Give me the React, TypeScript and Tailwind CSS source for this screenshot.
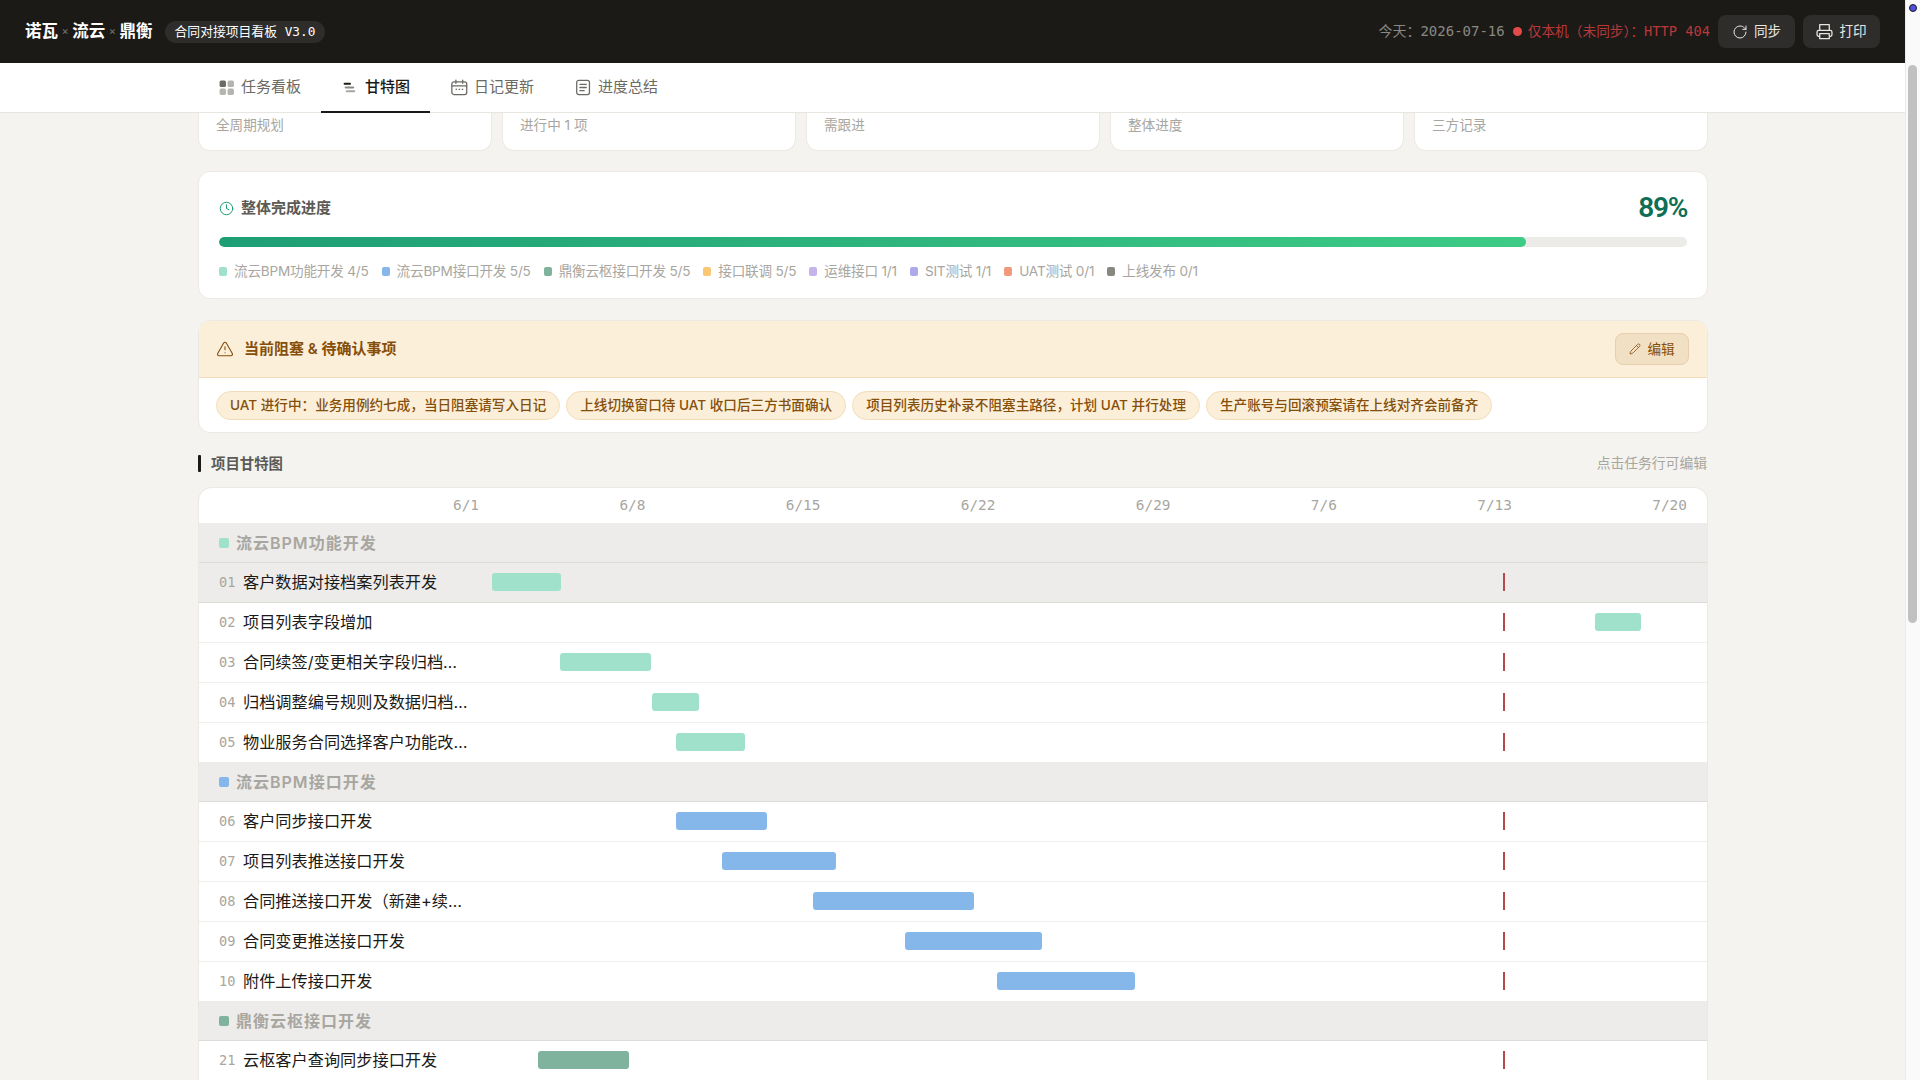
import React from 'react';
import { RotateCw, Clock, TriangleAlert, Pencil } from 'lucide-react';

const SANS = "font-['Inter','Noto_Sans_CJK_SC',sans-serif]";

const stats = ['全周期规划', '进行中 1 项', '需跟进', '整体进度', '三方记录'];

const legend = [
  { color: 'bg-[#9fe1cb]', text: '流云BPM功能开发 4/5' },
  { color: 'bg-[#85b7eb]', text: '流云BPM接口开发 5/5' },
  { color: 'bg-[#7fb39d]', text: '鼎衡云枢接口开发 5/5' },
  { color: 'bg-[#fac775]', text: '接口联调 5/5' },
  { color: 'bg-[#c5b3ec]', text: '运维接口 1/1' },
  { color: 'bg-[#afa9ec]', text: 'SIT测试 1/1' },
  { color: 'bg-[#f0997b]', text: 'UAT测试 0/1' },
  { color: 'bg-[#888780]', text: '上线发布 0/1' },
];

const chips = [
  'UAT 进行中：业务用例约七成，当日阻塞请写入日记',
  '上线切换窗口待 UAT 收口后三方书面确认',
  '项目列表历史补录不阻塞主路径，计划 UAT 并行处理',
  '生产账号与回滚预案请在上线对齐会前备齐',
];

const dates = ['6/1', '6/8', '6/15', '6/22', '6/29', '7/6', '7/13', '7/20'];

type Task = { no: string; name: string; left: number; width: number; hover?: boolean };
type Group = { name: string; dot: string; bar: string; tasks: Task[] };

// left is measured from the start of the track, which sits at x=454
const groups: Group[] = [
  {
    name: '流云BPM功能开发',
    dot: 'bg-[#9fe1cb]',
    bar: 'bg-[#9fe1cb]',
    tasks: [
      { no: '01', name: '客户数据对接档案列表开发', left: 38, width: 69, hover: true },
      { no: '02', name: '项目列表字段增加', left: 1141, width: 46 },
      { no: '03', name: '合同续签/变更相关字段归档优化', left: 106, width: 91 },
      { no: '04', name: '归档调整编号规则及数据归档处理', left: 198, width: 47 },
      { no: '05', name: '物业服务合同选择客户功能改造', left: 222, width: 69 },
    ],
  },
  {
    name: '流云BPM接口开发',
    dot: 'bg-[#85b7eb]',
    bar: 'bg-[#85b7eb]',
    tasks: [
      { no: '06', name: '客户同步接口开发', left: 222, width: 91 },
      { no: '07', name: '项目列表推送接口开发', left: 268, width: 114 },
      { no: '08', name: '合同推送接口开发（新建+续签）', left: 359, width: 161 },
      { no: '09', name: '合同变更推送接口开发', left: 451, width: 137 },
      { no: '10', name: '附件上传接口开发', left: 543, width: 138 },
    ],
  },
  {
    name: '鼎衡云枢接口开发',
    dot: 'bg-[#7fb39d]',
    bar: 'bg-[#7fb39d]',
    tasks: [{ no: '21', name: '云枢客户查询同步接口开发', left: 84, width: 91 }],
  },
];

function BoardIcon() {
  return (
    <svg width="17" height="17" viewBox="0 0 16 16">
      <rect x="1.5" y="1.5" width="6" height="6" rx="1.5" fill="#6b6a65" />
      <rect x="9" y="1.5" width="6" height="6" rx="1.5" fill="#b5b4ae" />
      <rect x="1.5" y="9" width="6" height="6" rx="1.5" fill="#b5b4ae" />
      <rect x="9" y="9" width="6" height="6" rx="1.5" fill="#b5b4ae" />
    </svg>
  );
}

function GanttIcon() {
  return (
    <svg width="17" height="17" viewBox="0 0 16 16">
      <rect x="1.5" y="3.5" width="7" height="2" rx="1" fill="#1c1a17" />
      <rect x="2.5" y="7" width="9" height="2" rx="1" fill="#8a8983" />
      <rect x="3.5" y="10.5" width="9" height="2" rx="1" fill="#a8a6a0" />
    </svg>
  );
}

function CalendarIcon() {
  return (
    <svg width="17" height="17" viewBox="0 0 16 16" fill="none" stroke="#6b6a65" strokeWidth="1.2">
      <rect x="0.8" y="2.6" width="14" height="12" rx="2" />
      <path d="M0.8 6.4h14M4.6 1v3M11 1v3" strokeLinecap="round" />
      <path d="M4.3 9.8h1.4M7.2 9.8h1.4M10.1 9.8h1.4" />
    </svg>
  );
}

function DocIcon() {
  return (
    <svg width="17" height="17" viewBox="0 0 16 16" fill="none" stroke="#6b6a65" strokeWidth="1.2">
      <rect x="1.6" y="1.2" width="12" height="13.6" rx="2" />
      <path d="M4.6 5h6M4.6 8h6M4.6 11h4" strokeLinecap="round" />
    </svg>
  );
}

function PrintIcon() {
  return (
    <svg width="17" height="17" viewBox="0 0 16 16" fill="none" stroke="currentColor" strokeWidth="1.2" strokeLinejoin="round">
      <path d="M3.5 7V1.5h9V7" />
      <path d="M3.5 12.5h-1A1.5 1.5 0 0 1 1 11V8.5A1.5 1.5 0 0 1 2.5 7h11A1.5 1.5 0 0 1 15 8.5V11a1.5 1.5 0 0 1-1.5 1.5h-1" />
      <rect x="3.5" y="10" width="9" height="4.8" />
    </svg>
  );
}

const tabs = [
  { label: '任务看板', icon: <BoardIcon /> },
  { label: '甘特图', icon: <GanttIcon />, active: true },
  { label: '日记更新', icon: <CalendarIcon /> },
  { label: '进度总结', icon: <DocIcon /> },
];

function TaskRow({ task, bar, last }: { task: Task; bar: string; last: boolean }) {
  return (
    <div
      className={`flex items-center ${last ? 'h-[39px]' : 'h-10 border-b'} ${
        task.hover ? 'bg-[#edecea] border-[#dcdad6]' : 'bg-white border-[#efeeeb]'
      }`}
    >
      <div className="flex w-[255px] shrink-0 items-center pl-[20px]">
        <span className="w-[24px] shrink-0 font-['DejaVu_Sans_Mono',monospace] text-[13.6px] text-[#a8a6a0]">
          {task.no}
        </span>
        <span className="w-[226px] shrink-0 truncate text-[16.2px] text-[#1c1a17]">{task.name}</span>
      </div>
      <div className="relative mt-[10px] h-[18px] flex-1 self-start">
        <div
          className={`absolute top-0 h-[18px] rounded-[3px] ${bar}`}
          style={{ left: task.left, width: task.width }}
        />
        <div className="absolute left-[1049px] top-0 h-[18px] w-[2px] bg-[#b5494a]" />
      </div>
    </div>
  );
}

export default function App() {
  return (
    <div className={`flex h-screen overflow-hidden bg-[#f4f3ef] ${SANS}`}>
      <div className="flex min-w-0 flex-1 flex-col">
        <header className="flex h-[63px] shrink-0 items-center justify-between bg-[#1c1a17] px-[25px]">
          <div className="flex items-center">
            <span className="text-[16.5px] font-bold text-white">诺瓦</span>
            <span className="mx-[3.5px] text-[11px] text-[#77756f]">×</span>
            <span className="text-[16.5px] font-bold text-white">流云</span>
            <span className="mx-[3.5px] text-[11px] text-[#77756f]">×</span>
            <span className="text-[16.5px] font-bold text-white">鼎衡</span>
            <span className="ml-[12px] flex h-[22px] items-center rounded-full bg-[#2e2d2b] px-[10px] font-['DejaVu_Sans_Mono','Noto_Sans_CJK_SC',monospace] text-[12.8px] text-white">
              合同对接项目看板 V3.0
            </span>
          </div>
          <div className="flex items-center">
            <span className="font-['DejaVu_Sans_Mono','Noto_Sans_CJK_SC',monospace] text-[14px] text-[#8a8983]">
              今天：2026-07-16
            </span>
            <span className="ml-[8px] h-[9px] w-[9px] rounded-full bg-[#e24b4a]" />
            <span className="ml-[6px] font-['DejaVu_Sans_Mono','Noto_Sans_CJK_SC',monospace] text-[13.7px] text-[#b8383a]">
              仅本机（未同步）：HTTP 404
            </span>
            <button className="ml-[8px] flex h-[33px] w-[77px] items-center justify-center gap-[6px] rounded-lg bg-[#2e2d2b] text-[13.6px] text-[#e8e6e1]">
              <RotateCw size={16} strokeWidth={1.5} />
              同步
            </button>
            <button className="ml-[8px] flex h-[33px] w-[77px] items-center justify-center gap-[6px] rounded-lg bg-[#2e2d2b] text-[13.6px] text-[#e8e6e1]">
              <PrintIcon />
              打印
            </button>
          </div>
        </header>

        <nav className="flex h-[50px] shrink-0 items-stretch border-b border-[#e8e6e1] bg-white pl-[197px]">
          {tabs.map((tab) => (
            <div
              key={tab.label}
              className={`-mb-px flex items-center gap-[6px] border-b-2 pl-[21px] pr-[20px] text-[15px] ${
                tab.active
                  ? 'border-[#1c1a17] font-medium text-[#1c1a17]'
                  : 'border-transparent text-[#6b6a65]'
              }`}
            >
              {tab.icon}
              {tab.label}
            </div>
          ))}
        </nav>

        <main className="ml-[198px] flex w-[1510px] flex-col">
          <div className="grid h-[38px] grid-cols-5 gap-[10px]">
            {stats.map((label) => (
              <div
                key={label}
                className="rounded-b-xl border border-t-0 border-[#ece9e3] bg-white pl-[17px] pt-[2px] text-[13.6px] text-[#a8a6a0]"
              >
                {label}
              </div>
            ))}
          </div>

          <section className="mt-[20px] h-[128px] rounded-xl border border-[#ece9e3] bg-white px-5 pt-[18px]">
            <div className="flex h-[36px] items-center justify-between">
              <div className="flex items-center gap-[7px] text-[15px] font-semibold text-[#5c5a55]">
                <Clock size={15} strokeWidth={1.6} className="text-[#1d9e75]" />
                整体完成进度
              </div>
              <span className="font-['Roboto','Inter',sans-serif] text-[28px] font-semibold tracking-[-1.3px] text-[#0f6e56]">
                89%
              </span>
            </div>
            <div className="mt-[11px] h-[10px] overflow-hidden rounded-full bg-[#ecebe7]">
              <div className="h-full w-[89%] rounded-full bg-gradient-to-r from-[#1d9e75] to-[#3dcb85]" />
            </div>
            <div className="mt-[14px] flex items-center gap-[13px]">
              {legend.map((item) => (
                <div
                  key={item.text}
                  className="flex items-center gap-[7px] text-[13.6px] tracking-[-0.2px] text-[#a8a6a0]"
                >
                  <span className={`h-[9px] w-[8px] rounded-[2px] ${item.color}`} />
                  {item.text}
                </div>
              ))}
            </div>
          </section>

          <section className="mt-[21px] h-[113px] overflow-hidden rounded-xl border border-[#ece9e3] bg-white">
            <div className="flex h-[57px] items-center justify-between border-b border-[#f0dcb8] bg-[#fcefd9] pl-[17px] pr-[18px]">
              <div className="flex items-center gap-[10px] text-[15px] font-semibold text-[#854f0b]">
                <TriangleAlert size={18} strokeWidth={1.5} />
                当前阻塞 & 待确认事项
              </div>
              <button className="flex h-[32px] w-[74px] items-center justify-center gap-[6px] rounded-lg border border-[#e6d0ab] bg-[#f2e0c5] text-[13.6px] text-[#854f0b]">
                <Pencil size={12} strokeWidth={1.6} />
                编辑
              </button>
            </div>
            <div className="flex gap-[6px] pl-[17px] pt-[13px]">
              {chips.map((chip) => (
                <span
                  key={chip}
                  className="flex h-[29px] items-center rounded-full border border-[#f0dcb8] bg-[#fcefd9] px-[13px] text-[13.6px] font-medium text-[#854f0b]"
                >
                  {chip}
                </span>
              ))}
            </div>
          </section>

          <div className="mt-[22px] flex h-[17px] items-center justify-between pr-px">
            <div className="flex items-center gap-[10px] text-[14.4px] font-semibold text-[#5c5a55]">
              <span className="h-[17px] w-[3px] rounded-[1px] bg-[#1c1a17]" />
              项目甘特图
            </div>
            <span className="text-[13.8px] text-[#a8a6a0]">点击任务行可编辑</span>
          </div>

          <section className="mt-[15px] overflow-hidden rounded-t-[14px] border border-b-0 border-[#ece9e3] bg-white">
            <div className="flex h-[35px] items-center justify-between pl-[254px] pr-[20px] font-['DejaVu_Sans_Mono',monospace] text-[14.4px] text-[#a8a6a0]">
              {dates.map((d) => (
                <span key={d}>{d}</span>
              ))}
            </div>
            {groups.map((group) => (
              <div key={group.name}>
                <div className="flex h-10 items-center gap-[7px] border-b border-[#dedcd8] bg-[#edecea] pl-[20px] text-[16px] font-semibold tracking-[1px] text-[#a8a6a0]">
                  <span className={`h-[10px] w-[10px] rounded-[2px] ${group.dot}`} />
                  {group.name}
                </div>
                {group.tasks.map((task, i) => (
                  <TaskRow
                    key={task.no}
                    task={task}
                    bar={group.bar}
                    last={i === group.tasks.length - 1}
                  />
                ))}
              </div>
            ))}
          </section>
        </main>
      </div>

      <div className="relative w-[15px] shrink-0 border-l border-[#eaeaea] bg-[#fafafa]">
        <span className="absolute left-[3px] top-[4px] h-[8px] w-[8px] rounded-full border border-[#1c1a17] bg-[#5050e0]" />
        <div className="absolute left-[2px] top-[65px] h-[558px] w-[9px] rounded-full bg-[#c1c1c1]" />
      </div>
    </div>
  );
}
